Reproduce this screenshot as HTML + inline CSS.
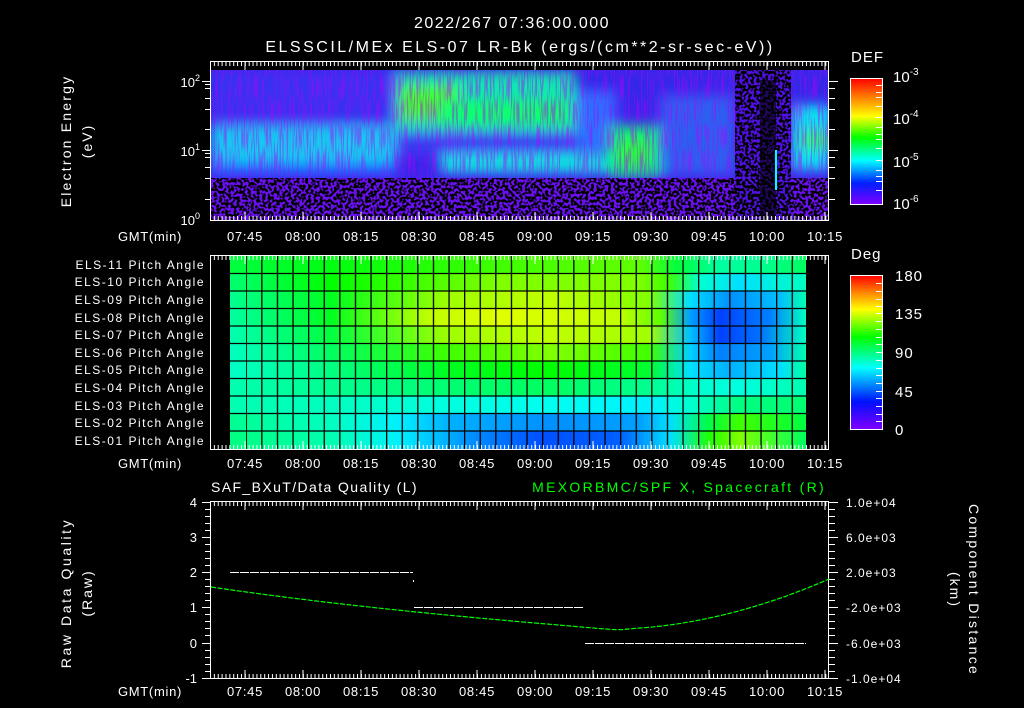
<!DOCTYPE html>
<html><head><meta charset="utf-8"><style>
html,body{margin:0;padding:0;background:#000;width:1024px;height:708px;overflow:hidden}
svg{display:block}
text{font-family:"Liberation Sans",sans-serif;fill:#fff}
</style></head><body>
<svg width="1024" height="708" viewBox="0 0 1024 708" xmlns="http://www.w3.org/2000/svg">
<defs>
<filter id="b4" x="-20%" y="-20%" width="140%" height="140%"><feGaussianBlur stdDeviation="6"/></filter>
<filter id="noise" x="0" y="0" width="100%" height="100%">
<feTurbulence type="fractalNoise" baseFrequency="0.35" numOctaves="1" seed="3"/>
<feColorMatrix type="matrix" values="0 0 0 0 0  0 0 0 0 0  0 0 0 0 0  0 0 0 -9 5"/>
</filter>
<filter id="streak" x="0" y="0" width="100%" height="100%">
<feTurbulence type="fractalNoise" baseFrequency="0.7 0.04" numOctaves="1" seed="7"/>
<feColorMatrix type="matrix" values="0 0 0 0 0.45  0 0 0 0 0  0 0 0 0 1  0 0 0 -6 3.2"/>
</filter>
<clipPath id="c1"><rect x="211" y="70" width="618" height="150"/></clipPath>
<linearGradient id="defbar" x1="0" y1="0" x2="0" y2="1">
<stop offset="0" stop-color="#ff0000"/><stop offset=".15" stop-color="#ff8000"/><stop offset=".3" stop-color="#ffff00"/><stop offset=".47" stop-color="#00ff00"/><stop offset=".65" stop-color="#00ffff"/><stop offset=".83" stop-color="#0020ff"/><stop offset="1" stop-color="#8000ff"/>
</linearGradient>
<linearGradient id="degbar" x1="0" y1="0" x2="0" y2="1">
<stop offset="0" stop-color="#ff0000"/><stop offset=".12" stop-color="#ff9000"/><stop offset=".22" stop-color="#ffff00"/><stop offset=".4" stop-color="#00ff00"/><stop offset=".6" stop-color="#00ffff"/><stop offset=".82" stop-color="#0010ff"/><stop offset="1" stop-color="#8000ff"/>
</linearGradient>
<pattern id="tk1" x="210" y="0" width="3.87" height="10" patternUnits="userSpaceOnUse"><rect x="0" y="0" width="1" height="10" fill="#fff"/></pattern>
<pattern id="vgrid" x="230" y="0" width="15.6" height="10" patternUnits="userSpaceOnUse"><rect x="0" y="0" width="1.3" height="10" fill="#000"/></pattern>
<linearGradient id="r1" gradientUnits="userSpaceOnUse" x1="230" x2="806" y1="0" y2="0"><stop offset="0" stop-color="#00ff40"/><stop offset=".174" stop-color="#00ff10"/><stop offset=".469" stop-color="#40ff00"/><stop offset=".71" stop-color="#60ff00"/><stop offset=".78" stop-color="#00ff40"/><stop offset=".85" stop-color="#00ffa0"/><stop offset=".92" stop-color="#00ff90"/><stop offset="1" stop-color="#00ff60"/></linearGradient>
<linearGradient id="r2" gradientUnits="userSpaceOnUse" x1="230" x2="806" y1="0" y2="0"><stop offset="0" stop-color="#00ff70"/><stop offset=".174" stop-color="#00ff00"/><stop offset=".469" stop-color="#80ff00"/><stop offset=".71" stop-color="#80ff00"/><stop offset=".76" stop-color="#40ff00"/><stop offset=".816" stop-color="#00ffd0"/><stop offset=".885" stop-color="#00e0ff"/><stop offset="1" stop-color="#00ffc0"/></linearGradient>
<linearGradient id="r3" gradientUnits="userSpaceOnUse" x1="230" x2="806" y1="0" y2="0"><stop offset="0" stop-color="#00ff90"/><stop offset=".174" stop-color="#00ff20"/><stop offset=".382" stop-color="#a0ff00"/><stop offset=".556" stop-color="#c0ff00"/><stop offset=".729" stop-color="#80ff00"/><stop offset=".799" stop-color="#00e0ff"/><stop offset=".868" stop-color="#0090ff"/><stop offset=".955" stop-color="#00c0ff"/><stop offset="1" stop-color="#00ffb0"/></linearGradient>
<linearGradient id="r4" gradientUnits="userSpaceOnUse" x1="230" x2="806" y1="0" y2="0"><stop offset="0" stop-color="#00ffa0"/><stop offset=".174" stop-color="#00ff20"/><stop offset=".347" stop-color="#c0ff00"/><stop offset=".469" stop-color="#e0ff00"/><stop offset=".677" stop-color="#c0ff00"/><stop offset=".747" stop-color="#60ff00"/><stop offset=".799" stop-color="#00a0ff"/><stop offset=".851" stop-color="#0040ff"/><stop offset=".938" stop-color="#0080ff"/><stop offset="1" stop-color="#00ffc0"/></linearGradient>
<linearGradient id="r5" gradientUnits="userSpaceOnUse" x1="230" x2="806" y1="0" y2="0"><stop offset="0" stop-color="#00ffb0"/><stop offset=".174" stop-color="#00ff40"/><stop offset=".382" stop-color="#a0ff00"/><stop offset=".556" stop-color="#c0ff00"/><stop offset=".729" stop-color="#a0ff00"/><stop offset=".799" stop-color="#00c0ff"/><stop offset=".851" stop-color="#0040ff"/><stop offset=".92" stop-color="#0070ff"/><stop offset="1" stop-color="#00ffc0"/></linearGradient>
<linearGradient id="r6" gradientUnits="userSpaceOnUse" x1="230" x2="806" y1="0" y2="0"><stop offset="0" stop-color="#00ffc0"/><stop offset=".174" stop-color="#00ff60"/><stop offset=".382" stop-color="#40ff00"/><stop offset=".556" stop-color="#80ff00"/><stop offset=".729" stop-color="#40ff00"/><stop offset=".799" stop-color="#00d0ff"/><stop offset=".851" stop-color="#0080ff"/><stop offset=".938" stop-color="#00a0ff"/><stop offset="1" stop-color="#00ffb0"/></linearGradient>
<linearGradient id="r7" gradientUnits="userSpaceOnUse" x1="230" x2="806" y1="0" y2="0"><stop offset="0" stop-color="#00ffc8"/><stop offset=".174" stop-color="#00ff80"/><stop offset=".382" stop-color="#00ff20"/><stop offset=".556" stop-color="#00ff00"/><stop offset=".729" stop-color="#00ff30"/><stop offset=".799" stop-color="#00e0ff"/><stop offset=".868" stop-color="#00b0ff"/><stop offset=".955" stop-color="#00e0ff"/><stop offset="1" stop-color="#00ffa0"/></linearGradient>
<linearGradient id="r8" gradientUnits="userSpaceOnUse" x1="230" x2="806" y1="0" y2="0"><stop offset="0" stop-color="#00ffb0"/><stop offset=".174" stop-color="#00ff90"/><stop offset=".382" stop-color="#00ff70"/><stop offset=".556" stop-color="#00ff60"/><stop offset=".729" stop-color="#00ff90"/><stop offset=".816" stop-color="#00ffd0"/><stop offset=".885" stop-color="#00ffe0"/><stop offset="1" stop-color="#00ffb0"/></linearGradient>
<linearGradient id="r9" gradientUnits="userSpaceOnUse" x1="230" x2="806" y1="0" y2="0"><stop offset="0" stop-color="#00ffb0"/><stop offset=".174" stop-color="#00ffc0"/><stop offset=".382" stop-color="#00ffe0"/><stop offset=".556" stop-color="#00fff0"/><stop offset=".729" stop-color="#00f0ff"/><stop offset=".799" stop-color="#00ffd0"/><stop offset=".885" stop-color="#00ff80"/><stop offset="1" stop-color="#00ff70"/></linearGradient>
<linearGradient id="r10" gradientUnits="userSpaceOnUse" x1="230" x2="806" y1="0" y2="0"><stop offset="0" stop-color="#00ff90"/><stop offset=".174" stop-color="#00ffc0"/><stop offset=".295" stop-color="#00f0ff"/><stop offset=".382" stop-color="#00b0ff"/><stop offset=".556" stop-color="#0090ff"/><stop offset=".712" stop-color="#00a0ff"/><stop offset=".764" stop-color="#00e0ff"/><stop offset=".833" stop-color="#00ff40"/><stop offset=".885" stop-color="#40ff00"/><stop offset="1" stop-color="#00ff40"/></linearGradient>
<linearGradient id="r11" gradientUnits="userSpaceOnUse" x1="230" x2="806" y1="0" y2="0"><stop offset="0" stop-color="#00ff80"/><stop offset=".174" stop-color="#00ffb0"/><stop offset=".295" stop-color="#00f0ff"/><stop offset=".417" stop-color="#0090ff"/><stop offset=".538" stop-color="#0050ff"/><stop offset=".677" stop-color="#0060ff"/><stop offset=".764" stop-color="#00e0ff"/><stop offset=".833" stop-color="#20ff00"/><stop offset=".885" stop-color="#80ff00"/><stop offset="1" stop-color="#00ff60"/></linearGradient>
</defs>

<text x="512" y="28" font-size="16" text-anchor="middle" letter-spacing="1.5">2022/267 07:36:00.000</text>
<text x="520" y="52" font-size="16" text-anchor="middle" letter-spacing="2.5">ELSSCIL/MEx ELS-07 LR-Bk  (ergs/(cm**2-sr-sec-eV))</text>

<!-- Top spectrogram -->
<g clip-path="url(#c1)">
<rect x="211" y="70" width="618" height="150" fill="#3328e8"/>
<g filter="url(#b4)">
<rect x="211" y="70" width="185" height="55" fill="#3830f0"/>
<rect x="211" y="126" width="185" height="42" fill="#18c8f0"/>
<rect x="211" y="164" width="185" height="12" fill="#1a60ff"/>
<rect x="396" y="72" width="180" height="60" fill="#10e8b0"/>
<rect x="398" y="85" width="60" height="35" fill="#40ff30"/>
<rect x="440" y="100" width="130" height="25" fill="#10ff70"/>
<rect x="396" y="132" width="180" height="22" fill="#3040f0"/>
<rect x="440" y="153" width="170" height="20" fill="#10e0e0"/>
<rect x="576" y="90" width="40" height="60" fill="#2a70ff"/>
<rect x="608" y="125" width="55" height="52" fill="#10e880"/>
<ellipse cx="634" cy="152" rx="20" ry="16" fill="#20ff40"/>
<rect x="660" y="95" width="75" height="80" fill="#2a60f0"/>
<rect x="791" y="105" width="40" height="65" fill="#10e0f0"/>
<rect x="800" y="130" width="30" height="20" fill="#20ff80"/>
</g>
<rect x="211" y="70" width="618" height="110" filter="url(#streak)" opacity=".45"/>
<rect x="211" y="178" width="618" height="42" fill="#6a10f0"/>
<rect x="735" y="70" width="56" height="150" fill="#5010e0"/>
<rect x="211" y="178" width="618" height="42" filter="url(#noise)"/>
<rect x="735" y="70" width="56" height="150" filter="url(#noise)"/>
<rect x="760" y="80" width="16" height="140" fill="#000" opacity=".6"/>
<rect x="775" y="150" width="2" height="40" fill="#00ffff"/>
</g>
<rect x="210.5" y="61.5" width="618" height="159" fill="none" stroke="#fff"/>
<rect x="210" y="62" width="619" height="4" fill="url(#tk1)"/>
<rect x="210" y="216" width="619" height="4" fill="url(#tk1)"/>
<g stroke="#fff" stroke-width="1">
<path d="M245 62v8M303 62v8M361 62v8M419 62v8M477 62v8M535 62v8M593 62v8M651 62v8M709 62v8M767 62v8M825 62v8"/>
<path d="M245 220v-8M303 220v-8M361 220v-8M419 220v-8M477 220v-8M535 220v-8M593 220v-8M651 220v-8M709 220v-8M767 220v-8M825 220v-8"/>
<path d="M202 81.5h9M202 150.5h9M205 98.5h6M205 109.5h6M205 129.5h6M205 167.5h6M205 178.5h6M205 199.5h6M205 88.5h6M205 84.5h6M205 157.5h6M205 153.5h6"/>
<path d="M829 81.5h9M829 150.5h9M829 98.5h6M829 109.5h6M829 129.5h6M829 167.5h6M829 178.5h6M829 199.5h6M829 88.5h6M829 157.5h6"/>
</g>
<text x="200" y="87" font-size="13" text-anchor="end">10<tspan dy="-6" font-size="9">2</tspan></text>
<text x="200" y="156" font-size="13" text-anchor="end">10<tspan dy="-6" font-size="9">1</tspan></text>
<text x="200" y="225" font-size="13" text-anchor="end">10<tspan dy="-6" font-size="9">0</tspan></text>
<text transform="translate(71,141) rotate(-90)" font-size="14" text-anchor="middle" letter-spacing="2.2">Electron Energy</text>
<text transform="translate(92,141) rotate(-90)" font-size="14" text-anchor="middle" letter-spacing="2">(eV)</text>
<g font-size="13" text-anchor="middle" letter-spacing=".7">
<text x="150" y="241">GMT(min)</text>
<text x="245" y="241">07:45</text><text x="303" y="241">08:00</text><text x="361" y="241">08:15</text><text x="419" y="241">08:30</text><text x="477" y="241">08:45</text><text x="535" y="241">09:00</text><text x="593" y="241">09:15</text><text x="651" y="241">09:30</text><text x="709" y="241">09:45</text><text x="767" y="241">10:00</text><text x="825" y="241">10:15</text>
</g>
<text x="851" y="62" font-size="15" letter-spacing="1">DEF</text>
<rect x="850.5" y="78.5" width="32" height="126" fill="url(#defbar)" stroke="#fff"/>
<g stroke="#fff"><path d="M876 85.5h6M876 92.5h6M876 97.5h6M876 106.5h6M876 117.5h6M876 127.5h6M876 134.5h6M876 139.5h6M876 148.5h6M876 160.5h6M876 170.5h6M876 176.5h6M876 181.5h6M876 190.5h6"/></g>
<text x="893" y="82" font-size="15">10<tspan dy="-7" font-size="10">-3</tspan></text>
<text x="893" y="124" font-size="15">10<tspan dy="-7" font-size="10">-4</tspan></text>
<text x="893" y="167" font-size="15">10<tspan dy="-7" font-size="10">-5</tspan></text>
<text x="893" y="209" font-size="15">10<tspan dy="-7" font-size="10">-6</tspan></text>

<!-- Middle -->
<rect x="230" y="256" width="576" height="18" fill="url(#r1)"/>
<rect x="230" y="273.5" width="576" height="18" fill="url(#r2)"/>
<rect x="230" y="291" width="576" height="18" fill="url(#r3)"/>
<rect x="230" y="308.5" width="576" height="18" fill="url(#r4)"/>
<rect x="230" y="326" width="576" height="18" fill="url(#r5)"/>
<rect x="230" y="343.5" width="576" height="18" fill="url(#r6)"/>
<rect x="230" y="361" width="576" height="18" fill="url(#r7)"/>
<rect x="230" y="378.5" width="576" height="18" fill="url(#r8)"/>
<rect x="230" y="396" width="576" height="18" fill="url(#r9)"/>
<rect x="230" y="413.5" width="576" height="18" fill="url(#r10)"/>
<rect x="230" y="431" width="576" height="18" fill="url(#r11)"/>
<rect x="246" y="256" width="560" height="193" fill="url(#vgrid)"/>
<g stroke="#000" stroke-width="1.3"><path d="M230 273.5h576M230 291h576M230 308.5h576M230 326h576M230 343.5h576M230 361h576M230 378.5h576M230 396h576M230 413.5h576M230 431h576"/></g>
<rect x="210.5" y="255.5" width="618" height="194" fill="none" stroke="#fff"/>
<rect x="210" y="256" width="619" height="4" fill="url(#tk1)"/>
<rect x="210" y="445" width="619" height="4" fill="url(#tk1)"/>
<g stroke="#fff"><path d="M245 256v8M303 256v8M361 256v8M419 256v8M477 256v8M535 256v8M593 256v8M651 256v8M709 256v8M767 256v8M825 256v8M245 449v-8M303 449v-8M361 449v-8M419 449v-8M477 449v-8M535 449v-8M593 449v-8M651 449v-8M709 449v-8M767 449v-8M825 449v-8"/></g>
<g font-size="12" text-anchor="end" letter-spacing="1.5">
<text x="205" y="269">ELS-11 Pitch Angle</text>
<text x="205" y="286">ELS-10 Pitch Angle</text>
<text x="205" y="304">ELS-09 Pitch Angle</text>
<text x="205" y="322">ELS-08 Pitch Angle</text>
<text x="205" y="339">ELS-07 Pitch Angle</text>
<text x="205" y="357">ELS-06 Pitch Angle</text>
<text x="205" y="374">ELS-05 Pitch Angle</text>
<text x="205" y="392">ELS-04 Pitch Angle</text>
<text x="205" y="410">ELS-03 Pitch Angle</text>
<text x="205" y="427">ELS-02 Pitch Angle</text>
<text x="205" y="445">ELS-01 Pitch Angle</text>
</g>
<g font-size="13" text-anchor="middle" letter-spacing=".7">
<text x="150" y="468">GMT(min)</text>
<text x="245" y="468">07:45</text><text x="303" y="468">08:00</text><text x="361" y="468">08:15</text><text x="419" y="468">08:30</text><text x="477" y="468">08:45</text><text x="535" y="468">09:00</text><text x="593" y="468">09:15</text><text x="651" y="468">09:30</text><text x="709" y="468">09:45</text><text x="767" y="468">10:00</text><text x="825" y="468">10:15</text>
</g>
<text x="851" y="259" font-size="15" letter-spacing="1">Deg</text>
<rect x="850.5" y="275.5" width="32" height="154" fill="url(#degbar)" stroke="#fff"/>
<g stroke="#fff"><path d="M876 283.5h6M876 291.5h6M876 299.5h6M876 306.5h6M876 313.5h6M876 321.5h6M876 329.5h6M876 337.5h6M876 344.5h6M876 352.5h6M876 360.5h6M876 368.5h6M876 375.5h6M876 383.5h6M876 391.5h6M876 398.5h6M876 406.5h6M876 414.5h6M876 421.5h6"/></g>
<g font-size="15" letter-spacing="1"><text x="895" y="281">180</text><text x="895" y="319">135</text><text x="895" y="358">90</text><text x="895" y="397">45</text><text x="895" y="435">0</text></g>

<!-- Bottom -->
<text x="211" y="492" font-size="14" letter-spacing="1.4">SAF_BXuT/Data Quality (L)</text>
<text x="826" y="492" font-size="14" text-anchor="end" letter-spacing="2.3" style="fill:#00ff00">MEXORBMC/SPF X, Spacecraft (R)</text>
<rect x="210.5" y="501.5" width="618" height="177" fill="none" stroke="#fff"/>
<rect x="210" y="502" width="619" height="4" fill="url(#tk1)"/>
<rect x="210" y="674" width="619" height="4" fill="url(#tk1)"/>
<g stroke="#fff"><path d="M245 502v8M303 502v8M361 502v8M419 502v8M477 502v8M535 502v8M593 502v8M651 502v8M709 502v8M767 502v8M825 502v8M245 678v-8M303 678v-8M361 678v-8M419 678v-8M477 678v-8M535 678v-8M593 678v-8M651 678v-8M709 678v-8M767 678v-8M825 678v-8"/>
<path d="M202 502.5h9M202 537.5h9M202 572.5h9M202 607.5h9M202 643.5h9M202 678.5h9M205 509.5h6M205 516.5h6M205 523.5h6M205 530.5h6M205 544.5h6M205 551.5h6M205 558.5h6M205 565.5h6M205 579.5h6M205 586.5h6M205 593.5h6M205 600.5h6M205 614.5h6M205 621.5h6M205 628.5h6M205 635.5h6M205 650.5h6M205 657.5h6M205 664.5h6M205 671.5h6"/>
<path d="M829 502.5h9M829 537.5h9M829 572.5h9M829 607.5h9M829 643.5h9M829 678.5h9M829 509.5h6M829 516.5h6M829 523.5h6M829 530.5h6M829 544.5h6M829 551.5h6M829 558.5h6M829 565.5h6M829 579.5h6M829 586.5h6M829 593.5h6M829 600.5h6M829 614.5h6M829 621.5h6M829 628.5h6M829 635.5h6M829 650.5h6M829 657.5h6M829 664.5h6M829 671.5h6"/>
</g>
<g font-size="13" text-anchor="end"><text x="197" y="507">4</text><text x="197" y="542">3</text><text x="197" y="577">2</text><text x="197" y="612">1</text><text x="197" y="648">0</text><text x="197" y="683">-1</text></g>
<g font-size="12" letter-spacing="1"><text x="846" y="507">1.0e+04</text><text x="846" y="542">6.0e+03</text><text x="846" y="577">2.0e+03</text><text x="846" y="612">-2.0e+03</text><text x="846" y="648">-6.0e+03</text><text x="846" y="683">-1.0e+04</text></g>
<g stroke="#fff" stroke-width="1" stroke-dasharray="9 1">
<path d="M230 572.5h183M414 607.5h170M585 643.5h221"/>
</g>
<rect x="413" y="580" width="1" height="2" fill="#fff"/>
<path d="M211 587 C320 603 430 614 535 623 S610 630 640 628 S740 618 829 579" fill="none" stroke="#00ff00" stroke-width="1.2" stroke-dasharray="5 1.5"/>
<text transform="translate(71,593) rotate(-90)" font-size="14" text-anchor="middle" letter-spacing="2.6">Raw Data Quality</text>
<text transform="translate(92,593) rotate(-90)" font-size="14" text-anchor="middle" letter-spacing="2">(Raw)</text>
<text transform="translate(969,590) rotate(90)" font-size="14" text-anchor="middle" letter-spacing="2.3">Component Distance</text>
<text transform="translate(950,590) rotate(90)" font-size="14" text-anchor="middle" letter-spacing="2">(km)</text>
<g font-size="13" text-anchor="middle" letter-spacing=".7">
<text x="150" y="696">GMT(min)</text>
<text x="245" y="696">07:45</text><text x="303" y="696">08:00</text><text x="361" y="696">08:15</text><text x="419" y="696">08:30</text><text x="477" y="696">08:45</text><text x="535" y="696">09:00</text><text x="593" y="696">09:15</text><text x="651" y="696">09:30</text><text x="709" y="696">09:45</text><text x="767" y="696">10:00</text><text x="825" y="696">10:15</text>
</g>
</svg>
</body></html>
